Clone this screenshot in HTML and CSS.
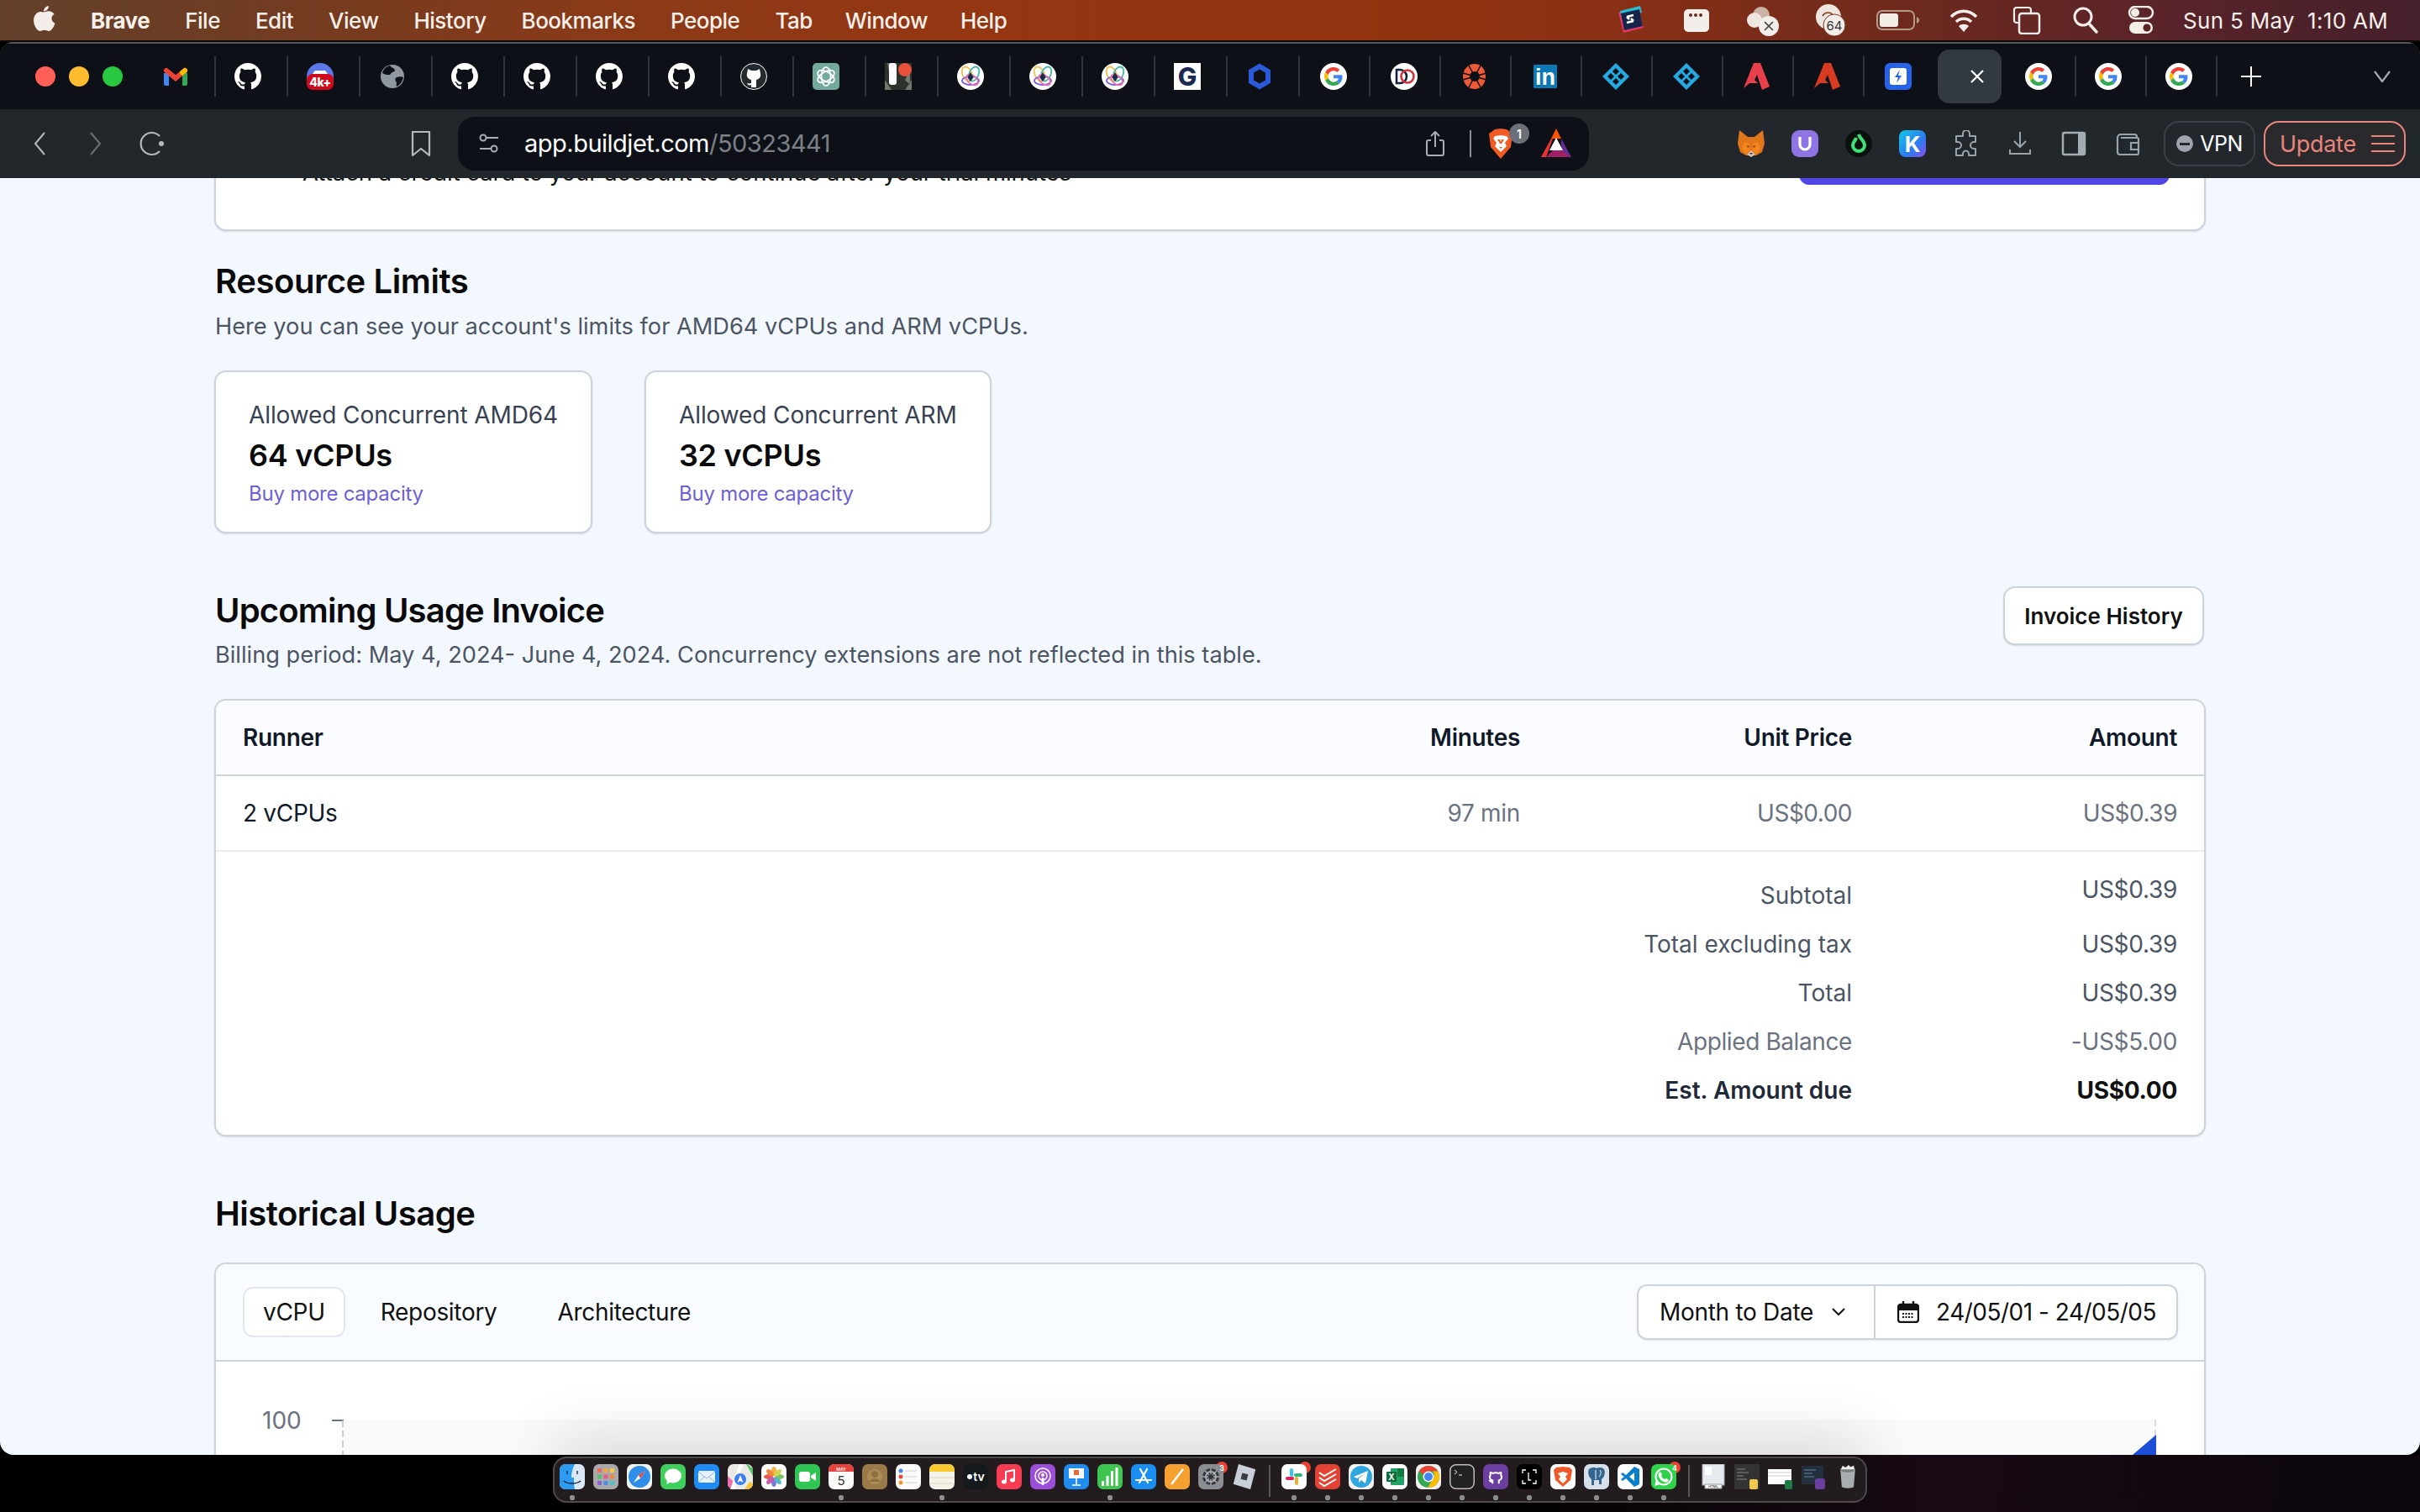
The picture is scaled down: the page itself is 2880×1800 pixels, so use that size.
FILE: index.html
```html
<!DOCTYPE html>
<html lang="en">
<head>
<meta charset="utf-8">
<title>BuildJet billing</title>
<link rel="stylesheet" href="styles.css">
</head>
<body>
<svg class="defs" xmlns="http://www.w3.org/2000/svg">
  <symbol id="gh" viewBox="0 0 16 16"><path fill="#fff" d="M8 0C3.58 0 0 3.58 0 8c0 3.54 2.29 6.53 5.47 7.59.4.07.55-.17.55-.38 0-.19-.01-.82-.01-1.49-2.01.37-2.53-.49-2.69-.94-.09-.23-.48-.94-.82-1.13-.28-.15-.68-.52-.01-.53.63-.01 1.08.58 1.23.82.72 1.21 1.87.87 2.33.66.07-.52.28-.87.51-1.07-1.78-.2-3.64-.89-3.64-3.95 0-.87.31-1.59.82-2.15-.08-.2-.36-1.02.08-2.12 0 0 .67-.21 2.2.82.64-.18 1.32-.27 2-.27.68 0 1.36.09 2 .27 1.53-1.04 2.2-.82 2.2-.82.44 1.1.16 1.92.08 2.12.51.56.82 1.27.82 2.15 0 3.07-1.87 3.75-3.65 3.95.29.25.54.73.54 1.48 0 1.07-.01 1.93-.01 2.2 0 .21.15.46.55.38A8.013 8.013 0 0016 8c0-4.42-3.58-8-8-8z"/></symbol>
  <symbol id="ghc" viewBox="0 0 32 32"><circle cx="16" cy="16" r="15.5" fill="#24292e" stroke="#fff"/><path fill="#fff" d="M8 12l1-5 4 2h6l4-2 1 5c1 4-1 7-5 8v9h-6v-3c-3 1-4 0-5-2 1 0 2 1 5 0v-4c-4-1-6-4-5-8z"/></symbol>
  <symbol id="gmail" viewBox="0 0 32 32"><path fill="#4285f4" d="M2 12h6v15H4a2 2 0 01-2-2z"/><path fill="#34a853" d="M24 12h6v13a2 2 0 01-2 2h-4z"/><path fill="none" stroke="#ea4335" stroke-width="6" stroke-linecap="round" d="M5 9l11 9 11-9"/><path fill="none" stroke="#fbbc05" stroke-width="6" stroke-linecap="round" d="M27 9l-3 2.500"/></symbol>
  <symbol id="goo" viewBox="0 0 32 32"><circle cx="16" cy="16" r="16" fill="#fff"/><g transform="translate(5 5) scale(.458)"><path fill="#EA4335" d="M24 9.5c3.54 0 6.71 1.22 9.21 3.6l6.85-6.85C35.9 2.38 30.47 0 24 0 14.62 0 6.51 5.38 2.56 13.22l7.98 6.19C12.43 13.72 17.74 9.5 24 9.5z"/><path fill="#4285F4" d="M46.98 24.55c0-1.57-.15-3.09-.38-4.55H24v9.02h12.94c-.58 2.96-2.26 5.48-4.78 7.18l7.73 6c4.51-4.18 7.09-10.36 7.09-17.65z"/><path fill="#FBBC05" d="M10.53 28.59c-.48-1.45-.76-2.99-.76-4.59s.27-3.14.76-4.59l-7.98-6.19C.92 16.46 0 20.12 0 24c0 3.88.92 7.54 2.56 10.78l7.97-6.19z"/><path fill="#34A853" d="M24 48c6.48 0 11.93-2.13 15.89-5.81l-7.73-6c-2.15 1.45-4.92 2.3-8.16 2.3-6.26 0-11.57-4.22-13.47-9.91l-7.98 6.19C6.51 42.62 14.62 48 24 48z"/></g></symbol>
  <symbol id="k4" viewBox="0 0 32 32"><path fill="#5b78e6" d="M0 16a16 16 0 0132 0v4H0z"/><path fill="#fff" d="M7 13l3-4h12l3 4z"/><rect y="13" width="32" height="19" rx="7" fill="#cf0a1c"/><text x="16" y="28" class="svg-4k">4k+</text></symbol>
  <symbol id="globe" viewBox="0 0 32 32"><circle cx="16" cy="16" r="14" fill="#9097a1"/><path fill="#0d1117" d="M13 3c2 3 6 3 6 6 0 2-4 1-5 4-1 2-6 1-8 0l-2-1c1-5 5-8 9-9zM21 17c3-1 6-1 8 0-1 5-4 9-8 11-1-2 1-4-1-6-1-2-1-4 1-5z"/></symbol>
  <symbol id="gpt" viewBox="0 0 32 32"><rect width="32" height="32" rx="5" fill="#74aa9c"/><g fill="none" stroke="#fff" stroke-width="1.7"><ellipse cx="16" cy="16" rx="5.5" ry="11"/><ellipse cx="16" cy="16" rx="5.5" ry="11" transform="rotate(60 16 16)"/><ellipse cx="16" cy="16" rx="5.5" ry="11" transform="rotate(120 16 16)"/></g></symbol>
  <symbol id="pic" viewBox="0 0 32 32"><rect width="32" height="32" fill="#2c332c"/><path fill="#6f7a6c" d="M0 20l8 12H0zM32 20l-8 12h8zM3 0h4v20zM24 20l6-12v18z"/><rect x="5" y="0" width="9" height="26" rx="3" fill="#fff"/><circle cx="24" cy="8" r="8" fill="#e8503c"/></symbol>
  <symbol id="eth" viewBox="0 0 32 32"><circle cx="16" cy="16" r="16" fill="#fff"/><g fill="none" stroke-width="1.8"><ellipse cx="12" cy="13" rx="5.5" ry="9" stroke="#f2c14e" transform="rotate(-25 12 13)"/><ellipse cx="20" cy="13" rx="5.5" ry="9" stroke="#43b7a8" transform="rotate(25 20 13)"/><ellipse cx="16" cy="21" rx="10" ry="5" stroke="#7a5be8"/><ellipse cx="18" cy="20" rx="8" ry="5" stroke="#ee6fa8" transform="rotate(40 18 20)"/></g><path fill="#1c2b4a" d="M16 11l3.500 6-3.500 5-3.500-5z"/></symbol>
  <symbol id="gsq" viewBox="0 0 32 32"><rect width="32" height="32" fill="#fff"/><text x="16" y="27" class="svg-gsq">G</text></symbol>
  <symbol id="hex" viewBox="0 0 32 32"><path fill="none" stroke="#2a5ada" stroke-width="6" d="M16 4l10 6v12l-10 6-10-6V10z"/></symbol>
  <symbol id="do" viewBox="0 0 32 32"><circle cx="16" cy="16" r="16" fill="#fff"/><path fill="none" stroke="#16213f" stroke-width="2.600" d="M7 8h4a8 8 0 010 16H7z"/><circle cx="20" cy="16" r="7.500" fill="none" stroke="#d8323a" stroke-width="2.600"/></symbol>
  <symbol id="orange" viewBox="0 0 32 32"><path fill="#ee5a36" d="M16 1c7 0 13 6 13 15s-6 15-13 15S2 25 2 16 9 1 16 1z"/><circle cx="16" cy="16" r="6" fill="#0d1117"/><path fill="none" stroke="#0d1117" stroke-width="1.500" d="M9 3l14 26M23 3L9 29M2 12l28 8M2 20l28-8"/></symbol>
  <symbol id="in" viewBox="0 0 32 32"><rect x="2" y="2" width="28" height="28" rx="1" fill="#0a78b5"/><text x="16" y="26" class="svg-in">in</text></symbol>
  <symbol id="dia" viewBox="0 0 32 32"><path fill="#25a9e0" d="M16 0l16 16-16 16L0 16z"/><path fill="#0d1117" d="M16 6l4 4-4 4-4-4zM16 18l4 4-4 4-4-4zM10 12l4 4-4 4-4-4zM22 12l4 4-4 4-4-4z"/></symbol>
  <symbol id="a1" viewBox="0 0 32 32"><path fill="#e8404a" d="M12 0h8l11 28-9 4-6-18-3 6 4 4H7l-7 6z"/></symbol>
  <symbol id="a2" viewBox="0 0 32 32"><path fill="#d93a22" d="M12 0h8l11 28-9 4-6-18-3 6 4 4H7l-7 6z"/></symbol>
  <symbol id="bolt" viewBox="0 0 32 32"><rect width="32" height="32" rx="6" fill="#2563eb"/><rect x="6" y="6" width="20" height="20" rx="3" fill="#fff"/><path fill="#2563eb" d="M18 8l-6 9h4l-2 7 6-9h-4z"/></symbol>

  <symbol id="d-finder" viewBox="0 0 30 30"><rect width="30" height="30" rx="7" fill="#dbe8f7"/><path fill="#2c9bf0" d="M7 0h11c-3 6-4 11-4 16h3c0 5 0 9 1 14H7a7 7 0 01-7-7V7a7 7 0 017-7z"/><path fill="none" stroke="#123" stroke-width="1.300" d="M5 20c5 4 15 4 20 0M9 8v4M21 8v4"/></symbol>
  <symbol id="d-launch" viewBox="0 0 30 30"><rect width="30" height="30" rx="7" fill="#a9a9ab"/><g><rect x="5" y="5" width="5" height="5" fill="#ef6a5a"/><rect x="12.500" y="5" width="5" height="5" fill="#f2a63d"/><rect x="20" y="5" width="5" height="5" fill="#f5c944"/><rect x="5" y="12.500" width="5" height="5" fill="#58c26b"/><rect x="12.500" y="12.500" width="5" height="5" fill="#e85c8a"/><rect x="20" y="12.500" width="5" height="5" fill="#f0863c"/><rect x="5" y="20" width="5" height="5" fill="#8a63d8"/><rect x="12.500" y="20" width="5" height="5" fill="#4a90e8"/><rect x="20" y="20" width="5" height="5" fill="#4cc2c4"/></g></symbol>
  <symbol id="d-safari" viewBox="0 0 30 30"><rect width="30" height="30" rx="7" fill="#f2f3f4"/><circle cx="15" cy="15" r="13" fill="#2f8fe8"/><path fill="#fff" d="M8 22l6-9 8-5-6 9z"/><path fill="#e8453c" d="M14 13l8-5-6 9z"/></symbol>
  <symbol id="d-msg" viewBox="0 0 30 30"><rect width="30" height="30" rx="7" fill="#3fcf5c"/><ellipse cx="15" cy="14" rx="10" ry="8.500" fill="#fff"/><path fill="#fff" d="M8 19l-1 5 6-3z"/></symbol>
  <symbol id="d-mail" viewBox="0 0 30 30"><rect width="30" height="30" rx="7" fill="#1f8cf5"/><rect x="5" y="8" width="20" height="14" rx="2" fill="#e9f1fa"/><path fill="none" stroke="#8eb8e6" d="M5 9l10 8 10-8M5 22l7-7M25 22l-7-7"/></symbol>
  <symbol id="d-maps" viewBox="0 0 30 30"><rect width="30" height="30" rx="7" fill="#e9ebe4"/><path fill="#59c36a" d="M12 0h10l8 14v-8L24 0z"/><path fill="#ee6fb0" d="M0 14l8 8v8H7a7 7 0 01-7-7z"/><path fill="#f5c63c" d="M20 30l6-9 4 2v0a7 7 0 01-7 7z"/><path fill="#fff" d="M14 0h5L8 30H3z"/><circle cx="15" cy="18" r="7" fill="#3a7ff0"/><path fill="#fff" d="M15 13l3.500 9-3.500-2-3.500 2z"/></symbol>
  <symbol id="d-photos" viewBox="0 0 30 30"><rect width="30" height="30" rx="7" fill="#fff"/><g opacity=".9"><ellipse cx="15" cy="8.500" rx="3" ry="5.500" fill="#f4a72c"/><ellipse cx="15" cy="21.500" rx="3" ry="5.500" fill="#6e67d8"/><ellipse cx="8.500" cy="15" rx="5.500" ry="3" fill="#e6483e"/><ellipse cx="21.500" cy="15" rx="5.500" ry="3" fill="#6cc04a"/><ellipse cx="10.500" cy="10.500" rx="3" ry="5.500" fill="#ee7a2d" transform="rotate(-45 10.500 10.500)"/><ellipse cx="19.500" cy="10.500" rx="3" ry="5.500" fill="#cfd23d" transform="rotate(45 19.500 10.500)"/><ellipse cx="10.500" cy="19.500" rx="3" ry="5.500" fill="#c94a9c" transform="rotate(45 10.500 19.500)"/><ellipse cx="19.500" cy="19.500" rx="3" ry="5.500" fill="#45b0b8" transform="rotate(-45 19.500 19.500)"/></g></symbol>
  <symbol id="d-ft" viewBox="0 0 30 30"><rect width="30" height="30" rx="7" fill="#2fc654"/><rect x="5" y="9" width="13" height="12" rx="3" fill="#fff"/><path fill="#fff" d="M19 14l6-4v10l-6-4z"/></symbol>
  <symbol id="d-cal" viewBox="0 0 30 30"><rect width="30" height="30" rx="7" fill="#fbfbfb"/><path fill="#e8433c" d="M7 0h16a7 7 0 017 7v2H0V7a7 7 0 017-7z"/><text x="15" y="7.500" class="svg-may">MAY</text><text x="15" y="25" class="svg-five">5</text></symbol>
  <symbol id="d-contacts" viewBox="0 0 30 30"><rect width="30" height="30" rx="7" fill="#9a7a48"/><circle cx="15" cy="15" r="9" fill="#ad8c58"/><circle cx="15" cy="12" r="4" fill="#8f7040"/><path fill="#8f7040" d="M8 21c2-5 12-5 14 0z"/></symbol>
  <symbol id="d-rem" viewBox="0 0 30 30"><rect width="30" height="30" rx="7" fill="#fbfbfb"/><circle cx="6" cy="8" r="2.500" fill="#3c86ea"/><circle cx="6" cy="15" r="2.500" fill="#e8483c"/><circle cx="6" cy="22" r="2.500" fill="#f09a2c"/><path stroke="#d0d0d0" d="M11 8h14M11 15h14M11 22h14"/></symbol>
  <symbol id="d-notes" viewBox="0 0 30 30"><rect width="30" height="30" rx="7" fill="#f5f2e8"/><path fill="#f9c932" d="M7 0h16a7 7 0 017 7v2H0V7a7 7 0 017-7z"/><path stroke="#dcd8cc" d="M0 16h30M0 23h30"/></symbol>
  <symbol id="d-tv" viewBox="0 0 30 30"><rect width="30" height="30" rx="7" fill="#141a1c"/><circle cx="8" cy="15" r="3" fill="#fff"/><text x="19" y="20" class="svg-tv">tv</text></symbol>
  <symbol id="d-music" viewBox="0 0 30 30"><rect width="30" height="30" rx="7" fill="#f53c52"/><path fill="none" stroke="#fff" stroke-width="2" d="M11 21V9l10-2v12"/><ellipse cx="9" cy="21" rx="3" ry="2.500" fill="#fff"/><ellipse cx="19" cy="19" rx="3" ry="2.500" fill="#fff"/></symbol>
  <symbol id="d-pod" viewBox="0 0 30 30"><rect width="30" height="30" rx="7" fill="#9a4fd6"/><circle cx="15" cy="14" r="9" fill="none" stroke="#fff" stroke-width="1.500"/><circle cx="15" cy="14" r="5" fill="none" stroke="#fff" stroke-width="1.500"/><circle cx="15" cy="13" r="2" fill="#fff"/><rect x="13.500" y="16" width="3" height="9" rx="1.500" fill="#fff"/></symbol>
  <symbol id="d-key" viewBox="0 0 30 30"><rect width="30" height="30" rx="7" fill="#1f8cee"/><rect x="6" y="5" width="18" height="12" fill="#fff"/><rect x="12" y="7" width="6" height="6" fill="#e86a3c"/><path stroke="#cfe2f7" stroke-width="2" d="M15 17v7M10 25h10"/></symbol>
  <symbol id="d-num" viewBox="0 0 30 30"><rect width="30" height="30" rx="7" fill="#3ec650"/><path fill="#fff" d="M5 20h3v6H5zM10.500 14h3v12h-3zM16 8h3v18h-3zM21.500 4h3v22h-3z"/></symbol>
  <symbol id="d-app" viewBox="0 0 30 30"><rect width="30" height="30" rx="7" fill="#1b8ef2"/><path fill="none" stroke="#fff" stroke-width="2.200" stroke-linecap="round" d="M11 6l9 16M19 6l-9 16M6 19h18"/></symbol>
  <symbol id="d-pages" viewBox="0 0 30 30"><rect width="30" height="30" rx="7" fill="#f5a030"/><path fill="none" stroke="#fff" stroke-width="2.500" d="M8 24L22 6"/></symbol>
  <symbol id="d-set" viewBox="0 0 30 30"><rect width="30" height="30" rx="7" fill="#8a8d92"/><circle cx="15" cy="15" r="10" fill="#33363a"/><circle cx="15" cy="15" r="6" fill="none" stroke="#a9acb0" stroke-width="2"/><path stroke="#a9acb0" stroke-width="1.500" d="M15 5v20M5 15h20M8 8l14 14M22 8L8 22"/><circle cx="15" cy="15" r="3" fill="#33363a"/></symbol>
  <symbol id="d-rob" viewBox="0 0 30 34"><path fill="#c9d0d8" d="M7 0l23 7-7 27L0 27z"/><path fill="#3a3d42" d="M12 12l8 2-2 8-8-2z"/></symbol>
  <symbol id="d-slack" viewBox="0 0 30 30"><rect width="30" height="30" rx="7" fill="#fff"/><path stroke-width="4" stroke-linecap="round" d="M12 7v6" stroke="#36c5f0"/><path stroke-width="4" stroke-linecap="round" d="M7 17h6" stroke="#e01e5a"/><path stroke-width="4" stroke-linecap="round" d="M18 23v-6" stroke="#ecb22e"/><path stroke-width="4" stroke-linecap="round" d="M23 13h-6" stroke="#2eb67d"/></symbol>
  <symbol id="d-todo" viewBox="0 0 30 30"><rect width="30" height="30" rx="7" fill="#e44232"/><path fill="none" stroke="#fff" stroke-width="2" d="M5 10l6 4 14-8M5 16l6 4 14-8M5 22l6 4 14-8"/></symbol>
  <symbol id="d-tg" viewBox="0 0 30 30"><rect width="30" height="30" rx="7" fill="#f3f3f3"/><circle cx="15" cy="15" r="13" fill="#2fa6e0"/><path fill="#fff" d="M6 15l17-7-3 15-5-4-3 3v-5l8-6-10 6z"/></symbol>
  <symbol id="d-xl" viewBox="0 0 30 30"><rect width="30" height="30" rx="7" fill="#fff"/><rect x="10" y="5" width="16" height="20" rx="1" fill="#21a366"/><path fill="#107c41" d="M18 5h8v10h-8z"/><rect x="5" y="9" width="12" height="12" rx="1" fill="#0e6b38"/><text x="11" y="19" class="svg-x">X</text></symbol>
  <symbol id="d-chrome" viewBox="0 0 30 30"><rect width="30" height="30" rx="7" fill="#f1f1f1"/><circle cx="15" cy="15" r="13" fill="#34a853"/><path fill="#ea4335" d="M3.700 8.500A13 13 0 0126.300 8.500H15a6.500 6.500 0 00-6 4z"/><path fill="#fbbc05" d="M26.300 8.500A13 13 0 0114 28l6-10a6.500 6.500 0 000-9.500z"/><circle cx="15" cy="15" r="6.500" fill="#fff"/><circle cx="15" cy="15" r="5" fill="#4285f4"/></symbol>
  <symbol id="d-term" viewBox="0 0 30 30"><rect x=".75" y=".75" width="28.500" height="28.500" rx="7" fill="#222" stroke="#bbb" stroke-width="1.500"/><path fill="none" stroke="#eee" d="M6 7l3 2.500-3 2.500M11 13h4"/></symbol>
  <symbol id="d-ghd" viewBox="0 0 30 30"><rect width="30" height="30" rx="7" fill="#6b3ea0"/><g transform="translate(5 5) scale(1.25)"><circle cx="8" cy="8" r="8" fill="#6b3ea0"/><path fill="none" stroke="#fff" stroke-width="1.600" d="M5 14.500v-3C2 11 2 8 3 6.500 2.800 5 3 4 3 4s1 0 2.200.8a8 8 0 015.600 0C12 4 13 4 13 4s.2 1 0 2.500c1 1.500 1 4.500-2 5v3M5 13c-2 0-2.500-1-3-2"/></g></symbol>
  <symbol id="d-linear" viewBox="0 0 30 30"><rect width="30" height="30" rx="7" fill="#000"/><path fill="none" stroke="#fff" stroke-width="1.300" d="M7 11V7h4M19 7h4v4M7 19v4h4M19 23h4v-4M14 10v9h3"/></symbol>
  <symbol id="d-brave" viewBox="0 0 30 30"><rect width="30" height="30" rx="7" fill="#fff"/><path fill="#ef5a28" d="M15 3l8 1 3 3-2 12-9 8-9-8L4 7l3-3z"/><path fill="#fff" d="M15 9l6 2-3 4 2 3-5 5-5-5 2-3-3-4z"/></symbol>
  <symbol id="d-pg" viewBox="0 0 30 30"><rect width="30" height="30" rx="7" fill="#d5e0ea"/><path fill="#336791" d="M6 6c4-3 8-2 9-1 3-2 7-1 9 1 2 4 0 10-3 12v6h-3v-5h-6v6h-3v-7C6 16 4 10 6 6z"/><path fill="none" stroke="#fff" d="M14 7v11M19 7c2 3 1 6-1 8"/></symbol>
  <symbol id="d-vsc" viewBox="0 0 30 30"><rect width="30" height="30" rx="7" fill="#fff"/><path fill="#0a7fcc" d="M20 3l6 3v18l-6 3-10-10-4 3-2-2 4-3-4-3 2-2 4 3z"/><path fill="#fff" d="M20 10l-6 5 6 5z"/></symbol>
  <symbol id="d-wa" viewBox="0 0 30 30"><rect width="30" height="30" rx="7" fill="#2fd24a"/><circle cx="15" cy="15" r="9.500" fill="none" stroke="#fff" stroke-width="2.200"/><path fill="#fff" d="M4 26l2-7 5 5zM11 9l2 3-1 2c1 2 2 3 4 4l2-1 3 2c-1 3-4 3-6 2-3-1-5-4-6-6-1-3 0-5 2-6z"/></symbol>
  <symbol id="d-doc" viewBox="0 0 30 30"><rect x="2" y="0" width="26" height="25" fill="#e5ebef" stroke="#aab"/><rect x="5" y="3" width="8" height="10" fill="#fff"/><path fill="#fff" stroke="#999" d="M5 24h20v5H5z"/><text x="15" y="28" class="svg-html">HTML</text></symbol>
  <symbol id="d-stack1" viewBox="0 0 30 30"><rect width="30" height="30" fill="#333"/><path stroke="#888" d="M3 6h10M3 10h14M3 14h8M3 18h12"/><rect x="18" y="18" width="10" height="12" rx="2" fill="#f2c94c"/></symbol>
  <symbol id="d-stack2" viewBox="0 0 30 30"><rect y="6" width="28" height="18" fill="#fff"/><path stroke="#ccc" d="M0 10h28M0 14h28"/><rect x="20" y="19" width="9" height="11" rx="2" fill="#1d7a45"/></symbol>
  <symbol id="d-stack3" viewBox="0 0 30 30"><rect y="2" width="26" height="22" fill="#23303f"/><path stroke="#6c88a8" d="M3 7h14M3 11h10M3 15h12"/><rect x="16" y="17" width="12" height="13" rx="3" fill="#6b3ea0"/></symbol>
  <symbol id="d-trash" viewBox="0 0 30 34"><path fill="#a8adb0" d="M5 7h20l-2 24c-3 2-13 2-16 0z"/><ellipse cx="15" cy="7" rx="10" ry="4" fill="#777c80"/><path fill="#eee" d="M8 2l4 3 4-4 3 3 4-2 1 5H6z"/></symbol>
</svg>

<div class="screen">
  <header class="menubar">
    <div class="menu-left">
      <svg class="apple" viewBox="0 0 26 32"><path fill="#f4eeea" d="M18 1c0 3-2 6-6 6.500C12 4 14.500 1.500 18 1zM12 8.500c1.500 0 3-1.300 6-1.300 2.500 0 5 1.300 6.500 3.500-4.500 2.800-3.800 9 1 11-1.300 4-4.500 9.300-7.500 9.300-2 0-3-1.200-5.200-1.200-2.300 0-3.300 1.200-5.100 1.200C4 31 0 24 0 18.500 0 12.500 4 8 8 8c1.700 0 3 .5 4 .5z"/></svg>
      <span class="app-name">Brave</span>
      <span>File</span><span>Edit</span><span>View</span><span>History</span><span>Bookmarks</span><span>People</span><span>Tab</span><span>Window</span><span>Help</span>
    </div>
    <div class="menu-right">
      <span class="mslot s78"><svg class="mi34" viewBox="0 0 34 34"><path fill="#e0386c" d="M2 8l24-6 6 24-24 6z"/><path fill="#2bbbd0" d="M4 6l24-6 2 8L6 14z"/><path fill="#16244a" d="M5 9l22-5 4 20-22 5z"/><path fill="none" stroke="#fff" stroke-width="2.500" d="M12 20l8-2M20 18l-3-3M12 13l8-2M12 13l3 3"/></svg></span>
      <span class="mslot s78"><svg class="mi34" viewBox="0 0 34 34"><rect x="2" y="4" width="30" height="27" rx="5" fill="#f4eeea"/><circle cx="10" cy="11" r="2" fill="#6a2a1c"/><circle cx="16" cy="11" r="2" fill="#6a2a1c"/><circle cx="22" cy="11" r="2" fill="#6a2a1c"/></svg></span>
      <span class="mslot s78"><svg class="mi42" viewBox="0 0 42 42"><circle cx="20" cy="15" r="10" fill="#c9b3a6"/><circle cx="12" cy="21" r="9" fill="#efe6df"/><circle cx="29" cy="28" r="12" fill="#f4eeea"/><path stroke="#444" stroke-width="1.700" d="M24 23l10 10M34 23L24 33"/></svg></span>
      <span class="mslot s90"><svg class="mi42" viewBox="0 0 42 42"><circle cx="19" cy="17" r="15" fill="#efe6df"/><path fill="none" stroke="#7a3a22" stroke-width="1.500" d="M12 16c3-5 8-5 12-2"/><circle cx="26" cy="27" r="13" fill="#f4eeea" stroke="#7a3a22"/><text x="26" y="33" class="svg-64">64</text></svg></span>
      <span class="mslot s78"><svg class="batt" viewBox="0 0 52 24"><rect x="1" y="1" width="44" height="22" rx="6" fill="none" stroke="#b59a8c" stroke-width="2"/><rect x="4" y="4" width="22" height="16" rx="3" fill="#f4eeea"/><path fill="#b59a8c" d="M48 8c2 1 3 2 3 4s-1 3-3 4z"/></svg></span>
      <span class="mslot s78"><svg class="mi34" viewBox="0 0 34 34"><path fill="none" stroke="#f4eeea" stroke-width="3.500" d="M2 13c9-9 21-9 30 0M8 19c5-5 13-5 18 0"/><path fill="#f4eeea" d="M17 31l-6-7c3-3 9-3 12 0z"/></svg></span>
      <span class="mslot s70"><svg class="mi34" viewBox="0 0 34 34"><path fill="none" stroke="#f4eeea" stroke-width="2.200" d="M7 20H5a3 3 0 01-3-3V5a3 3 0 013-3h14a3 3 0 013 3v3"/><rect x="8" y="9" width="24" height="24" rx="3" fill="none" stroke="#f4eeea" stroke-width="2.500"/></svg></span>
      <span class="mslot s68"><svg class="mi34" viewBox="0 0 34 34"><circle cx="14" cy="13" r="10" fill="none" stroke="#f4eeea" stroke-width="3"/><path stroke="#f4eeea" stroke-width="3.500" stroke-linecap="round" d="M21 21l9 10"/></svg></span>
      <span class="mslot s50"><svg class="mi34" viewBox="0 0 34 34"><rect x="3" y="1" width="28" height="14" rx="7" fill="none" stroke="#f4eeea" stroke-width="2.500"/><circle cx="10" cy="8" r="5" fill="#f4eeea"/><rect x="3" y="19" width="28" height="14" rx="7" fill="#f4eeea"/><circle cx="24" cy="26" r="4.500" fill="#5d2325"/></svg></span>
      <time class="clock">Sun 5 May&nbsp; 1:10 AM</time>
    </div>
  </header>

  <div class="window">
    <div class="tabstrip">
      <div class="lights"><i class="light red"></i><i class="light amber"></i><i class="light green"></i></div>
      <div class="tab"><svg class="fav"><use href="#gmail"/></svg></div>
      <div class="tab"><svg class="fav"><use href="#gh"/></svg></div>
      <div class="tab"><svg class="fav"><use href="#k4"/></svg></div>
      <div class="tab"><svg class="fav"><use href="#globe"/></svg></div>
      <div class="tab"><svg class="fav"><use href="#gh"/></svg></div>
      <div class="tab"><svg class="fav"><use href="#gh"/></svg></div>
      <div class="tab"><svg class="fav"><use href="#gh"/></svg></div>
      <div class="tab"><svg class="fav"><use href="#gh"/></svg></div>
      <div class="tab"><svg class="fav"><use href="#ghc"/></svg></div>
      <div class="tab"><svg class="fav"><use href="#gpt"/></svg></div>
      <div class="tab"><svg class="fav"><use href="#pic"/></svg></div>
      <div class="tab"><svg class="fav"><use href="#eth"/></svg></div>
      <div class="tab"><svg class="fav"><use href="#eth"/></svg></div>
      <div class="tab"><svg class="fav"><use href="#eth"/></svg></div>
      <div class="tab"><svg class="fav"><use href="#gsq"/></svg></div>
      <div class="tab"><svg class="fav"><use href="#hex"/></svg></div>
      <div class="tab narrow"><svg class="fav"><use href="#goo"/></svg></div>
      <div class="tab narrow"><svg class="fav"><use href="#do"/></svg></div>
      <div class="tab narrow"><svg class="fav"><use href="#orange"/></svg></div>
      <div class="tab narrow"><svg class="fav"><use href="#in"/></svg></div>
      <div class="tab narrow"><svg class="fav"><use href="#dia"/></svg></div>
      <div class="tab narrow"><svg class="fav"><use href="#dia"/></svg></div>
      <div class="tab narrow"><svg class="fav"><use href="#a1"/></svg></div>
      <div class="tab narrow"><svg class="fav"><use href="#a2"/></svg></div>
      <div class="tab narrow plain"><svg class="fav"><use href="#bolt"/></svg></div>
      <div class="tab-active"><svg class="close" viewBox="0 0 16 16"><path stroke="#fff" stroke-width="2.200" d="M1 1l14 14M15 1L1 15"/></svg></div>
      <div class="tab narrow after-active"><svg class="fav"><use href="#goo"/></svg></div>
      <div class="tab narrow tight"><svg class="fav"><use href="#goo"/></svg></div>
      <div class="tab narrow tight"><svg class="fav"><use href="#goo"/></svg></div>
      <svg class="plus" viewBox="0 0 24 24"><path stroke="#fff" stroke-width="2" d="M12 0v24M0 12h24"/></svg>
      <svg class="tabs-more" viewBox="0 0 20 14"><path fill="none" stroke="#a3abb2" stroke-width="2.200" d="M1 1l9 12 9-12"/></svg>
    </div>

    <div class="toolbar">
      <div class="nav">
        <span class="tslot"><svg class="ic-chev" viewBox="0 0 14 28"><path fill="none" stroke="#b4b9bd" stroke-width="2" d="M13 1L2 14l11 13"/></svg></span>
        <span class="tslot"><svg class="ic-chev" viewBox="0 0 14 28"><path fill="none" stroke="#6b7075" stroke-width="2" d="M1 1l11 13L1 27"/></svg></span>
        <span class="tslot"><svg class="ic-30" viewBox="0 0 30 30"><path fill="none" stroke="#b4b9bd" stroke-width="2.200" d="M24 6A13 13 0 1024 24"/><circle cx="26" cy="15" r="3" fill="#b4b9bd"/></svg></span>
      </div>
      <span class="tslot bookmark"><svg class="ic-30" viewBox="0 0 30 30"><path fill="none" stroke="#b4b9bd" stroke-width="2.200" stroke-linejoin="round" d="M5 1h20v28l-10-8-10 8z"/></svg></span>
      <div class="urlbar">
        <svg class="ic-sliders" viewBox="0 0 24 24"><g fill="none" stroke="#a9aeb3" stroke-width="2"><circle cx="5" cy="5" r="3.500"/><path d="M9 5h14M1 18h13"/><circle cx="18" cy="18" r="3.500"/></g></svg>
        <span class="url"><span class="host">app.buildjet.com</span><span class="path">/50323441</span></span>
        <svg class="ic-share" viewBox="0 0 22 32"><path fill="none" stroke="#a9aeb3" stroke-width="2" stroke-linejoin="round" d="M6 12H3a2 2 0 00-2 2v14a2 2 0 002 2h16a2 2 0 002-2V14a2 2 0 00-2-2h-3M11 20V2M6 7l5-5 5 5"/></svg>
        <i class="url-sep"></i>
        <span class="lion">
          <svg class="ic-lion" viewBox="0 0 28 36"><path fill="#f15a22" d="M14 0l7 1 4 3 3 2-2 16-12 14L2 22 0 6l3-2 4-3z"/><path fill="#fff" d="M14 8l7 1 2 3-4 5 2 4-7 7-7-7 2-4-4-5 2-3z"/><path fill="#f15a22" d="M10 13h3l1 3 1-3h3l-3 5h-2zM12 22h4l-2 2z"/></svg>
          <b class="lion-badge">1</b>
        </span>
        <svg class="ic-bat" viewBox="0 0 36 36"><path fill="#ff5000" d="M18 0l6 12H12z"/><path fill="#e8332f" d="M12 12h2L6 34H0z"/><path fill="#662d91" d="M24 12l12 22H6l6-4h12z"/><path fill="#9e1f63" d="M6 34l12-12 18 12z"/><path fill="#fff" d="M18 11l8 15H10z"/></svg>
      </div>
      <div class="exts">
        <span class="xslot"><svg class="ic-32" viewBox="0 0 32 32"><path fill="#e2761b" d="M2 0l10 8h8L30 0l2 16-3 10-7 4H10l-7-4-3-10z"/><path fill="#f6851b" d="M8 14l6 2v8l-4 4-5-6zM24 14l-6 2v8l4 4 5-6z"/><path fill="#763d16" d="M11 18l3 1-2 2zM21 18l-3 1 2 2z"/><path fill="#d7c1b3" d="M11 29l5-5 5 5-5 3z"/><path fill="#233447" d="M14 27h4l-2 2z"/></svg></span>
        <span class="xslot"><svg class="ic-32" viewBox="0 0 32 32"><rect width="32" height="32" rx="9" fill="#8f75e3"/><path fill="none" stroke="#fff" stroke-width="3.200" d="M10 8v9a6 6 0 0012 0V8"/></svg></span>
        <span class="xslot"><svg class="ic-32" viewBox="0 0 32 32"><circle cx="16" cy="16" r="16" fill="#08110c"/><path fill="none" stroke="#3fe07a" stroke-width="4" d="M16 5c1 5 7 7 7 13a7 7 0 01-14 0c0-4 3-5 4-9"/></svg></span>
        <span class="xslot"><svg class="ic-32" viewBox="0 0 32 32"><defs><linearGradient id="kg" x1="0" y1="0" x2="1" y2="1"><stop offset="0" stop-color="#12c8e6"/><stop offset=".6" stop-color="#2c7cf0"/><stop offset="1" stop-color="#8a4ef0"/></linearGradient></defs><rect width="32" height="32" rx="8" fill="url(#kg)"/><text x="16" y="26" class="svg-k">K</text></svg></span>
        <span class="xslot"><svg class="ic-32" viewBox="0 0 32 32"><path fill="none" stroke="#9aa3a9" stroke-width="2" stroke-linejoin="round" d="M12 4a4 4 0 018 0v3h7v7h-2a4 4 0 000 8h2v8H19v-2a3.500 3.500 0 00-7 0v2H4v-8h2a4 4 0 000-8H4V7h8z"/></svg></span>
        <span class="xslot"><svg class="ic-30" viewBox="0 0 30 30"><path fill="none" stroke="#9aa3a9" stroke-width="2" d="M15 1v18M8 12l7 7 7-7M3 22v5h24v-5"/></svg></span>
        <span class="xslot"><svg class="ic-30" viewBox="0 0 30 30"><rect x="2" y="2" width="26" height="26" rx="2" fill="none" stroke="#a3acb1" stroke-width="2.500"/><rect x="20" y="2" width="8" height="26" fill="#a3acb1"/></svg></span>
        <span class="xslot"><svg class="ic-30" viewBox="0 0 30 30"><path fill="none" stroke="#9aa3a9" stroke-width="2.200" d="M3 8a4 4 0 014-4h16a3 3 0 013 3v1H7M3 8v17a3 3 0 003 3h20a2 2 0 002-2V10a2 2 0 00-2-2H7M28 14h-9v8h9"/></svg></span>
      </div>
      <div class="vpn"><i class="vpn-dot"></i><span>VPN</span></div>
      <div class="update"><span>Update</span><svg class="ic-burger" viewBox="0 0 28 22"><path stroke="#e8857c" stroke-width="2.200" d="M0 2h28M0 11h28M0 20h28"/></svg></div>
    </div>

    <main class="page">
      <section class="card trial">
        <p class="trial-text">Attach a credit card to your account to continue after your trial minutes</p>
        <button class="pay-btn"></button>
      </section>

      <h2 class="title first">Resource Limits</h2>
      <p class="sub">Here you can see your account's limits for AMD64 vCPUs and ARM vCPUs.</p>
      <div class="limits">
        <article class="card limit amd">
          <p class="limit-label">Allowed Concurrent AMD64</p>
          <p class="limit-value">64 vCPUs</p>
          <a class="limit-link">Buy more capacity</a>
        </article>
        <article class="card limit">
          <p class="limit-label">Allowed Concurrent ARM</p>
          <p class="limit-value">32 vCPUs</p>
          <a class="limit-link">Buy more capacity</a>
        </article>
      </div>

      <div class="section-head">
        <div class="section-text">
          <h2 class="title">Upcoming Usage Invoice</h2>
          <p class="sub">Billing period: May 4, 2024- June 4, 2024. Concurrency extensions are not reflected in this table.</p>
        </div>
        <button class="card history-btn">Invoice History</button>
      </div>

      <section class="card invoice">
        <div class="inv-row inv-head"><span>Runner</span><span class="r">Minutes</span><span class="r">Unit Price</span><span class="r">Amount</span></div>
        <div class="inv-row inv-body"><span class="runner">2 vCPUs</span><span class="r">97 min</span><span class="r num">US$0.00</span><span class="r num">US$0.39</span></div>
        <div class="summary">
          <div class="sum-row"><span>Subtotal</span><span class="raised num">US$0.39</span></div>
          <div class="sum-row"><span>Total excluding tax</span><span class="num">US$0.39</span></div>
          <div class="sum-row"><span>Total</span><span class="num">US$0.39</span></div>
          <div class="sum-row"><span>Applied Balance</span><span class="num">-US$5.00</span></div>
          <div class="sum-row strong"><span>Est. Amount due</span><span class="num">US$0.00</span></div>
        </div>
      </section>

      <h2 class="title hist">Historical Usage</h2>
      <section class="card usage">
        <div class="usage-head">
          <div class="usage-tabs">
            <span class="utab on">vCPU</span><span class="utab">Repository</span><span class="utab">Architecture</span>
          </div>
          <div class="range">
            <div class="range-sel"><span>Month to Date</span><svg class="ic-down" viewBox="0 0 16 10"><path fill="none" stroke="#111" stroke-width="2" d="M1 1l7 7 7-7"/></svg></div>
            <div class="range-date"><svg class="ic-cal" viewBox="0 0 26 26"><rect x="1" y="4" width="24" height="21" rx="3" fill="none" stroke="#111" stroke-width="2.400"/><rect x="1" y="4" width="24" height="7" fill="#111"/><path stroke="#111" stroke-width="2.400" d="M7 0v6M19 0v6"/><path stroke="#111" stroke-width="2" stroke-dasharray="2 1.500" d="M6 15h14M6 19h14"/></svg><span class="num">24/05/01 - 24/05/05</span></div>
          </div>
        </div>
        <div class="chart">
          <span class="axis">100</span>
          <svg class="plot" viewBox="0 0 2171 60" preserveAspectRatio="none"><rect x="14" y="0" width="2156" height="60" fill="#000" opacity=".018"/><path stroke="#6b7280" stroke-width="2" d="M0 1h14"/><path stroke="#c9ced6" stroke-width="2" stroke-dasharray="8 4" d="M13 1v59"/><path stroke="#d8dce2" stroke-width="2" stroke-dasharray="8 4" d="M2170 0v60"/><path fill="#1d4ed8" d="M2171 18v24h-28z"/></svg>
        </div>
      </section>
      <div class="dock-shadow"></div>
    </main>
  </div>

  <footer class="dock-area">
    <nav class="dock">
      <span class="dcell on"><svg class="dk"><use href="#d-finder"/></svg></span>
      <span class="dcell"><svg class="dk"><use href="#d-launch"/></svg></span>
      <span class="dcell"><svg class="dk"><use href="#d-safari"/></svg></span>
      <span class="dcell"><svg class="dk"><use href="#d-msg"/></svg></span>
      <span class="dcell"><svg class="dk"><use href="#d-mail"/></svg></span>
      <span class="dcell"><svg class="dk"><use href="#d-maps"/></svg></span>
      <span class="dcell"><svg class="dk"><use href="#d-photos"/></svg></span>
      <span class="dcell"><svg class="dk"><use href="#d-ft"/></svg></span>
      <span class="dcell on"><svg class="dk"><use href="#d-cal"/></svg></span>
      <span class="dcell"><svg class="dk"><use href="#d-contacts"/></svg></span>
      <span class="dcell"><svg class="dk"><use href="#d-rem"/></svg></span>
      <span class="dcell on"><svg class="dk"><use href="#d-notes"/></svg></span>
      <span class="dcell"><svg class="dk"><use href="#d-tv"/></svg></span>
      <span class="dcell"><svg class="dk"><use href="#d-music"/></svg></span>
      <span class="dcell"><svg class="dk"><use href="#d-pod"/></svg></span>
      <span class="dcell"><svg class="dk"><use href="#d-key"/></svg></span>
      <span class="dcell on"><svg class="dk"><use href="#d-num"/></svg></span>
      <span class="dcell"><svg class="dk"><use href="#d-app"/></svg></span>
      <span class="dcell"><svg class="dk"><use href="#d-pages"/></svg></span>
      <span class="dcell"><svg class="dk"><use href="#d-set"/></svg><b class="dbadge">3</b></span>
      <span class="dcell"><svg class="dk"><use href="#d-rob"/></svg></span>
      <i class="dsep"></i>
      <span class="dcell on"><svg class="dk"><use href="#d-slack"/></svg><b class="dbadge">•</b></span>
      <span class="dcell on"><svg class="dk"><use href="#d-todo"/></svg></span>
      <span class="dcell on"><svg class="dk"><use href="#d-tg"/></svg></span>
      <span class="dcell on"><svg class="dk"><use href="#d-xl"/></svg></span>
      <span class="dcell on"><svg class="dk"><use href="#d-chrome"/></svg></span>
      <span class="dcell on"><svg class="dk"><use href="#d-term"/></svg></span>
      <span class="dcell on"><svg class="dk"><use href="#d-ghd"/></svg></span>
      <span class="dcell on"><svg class="dk"><use href="#d-linear"/></svg></span>
      <span class="dcell on"><svg class="dk"><use href="#d-brave"/></svg></span>
      <span class="dcell on"><svg class="dk"><use href="#d-pg"/></svg></span>
      <span class="dcell on"><svg class="dk"><use href="#d-vsc"/></svg></span>
      <span class="dcell on"><svg class="dk"><use href="#d-wa"/></svg><b class="dbadge">4</b></span>
      <i class="dsep"></i>
      <span class="dcell"><svg class="dk"><use href="#d-doc"/></svg></span>
      <span class="dcell"><svg class="dk"><use href="#d-stack1"/></svg></span>
      <span class="dcell"><svg class="dk"><use href="#d-stack2"/></svg></span>
      <span class="dcell"><svg class="dk"><use href="#d-stack3"/></svg></span>
      <span class="dcell"><svg class="dk"><use href="#d-trash"/></svg></span>
    </nav>
  </footer>
</div>
</body>
</html>
```
FILE: styles.css
```css
* { box-sizing: border-box; }
html, body { margin: 0; padding: 0; background: #000; }
body { font-family: "Inter", "Liberation Sans", sans-serif; color: #111; overflow: hidden; }
p, h2 { margin: 0; }
button { font: inherit; }
.defs { display: none; }

.screen { width: 2880px; height: 1800px; display: flex; flex-direction: column; background: #000; }

/* menu bar */
.menubar {
  height: 50px; flex: none; display: flex; justify-content: space-between; align-items: flex-start;
  background: linear-gradient(90deg, #63402c 0%, #6f3c22 10%, #8a3a18 25%, #943612 40%, #92340f 55%, #8a3014 66%, #6f2a1d 78%, #58232a 90%, #44202a 100%);
  border-bottom: 2px solid #0a0a0a; color: #f7efe9; font-size: 26px;
}
.menu-left { display: flex; align-items: center; height: 48px; gap: 42px; padding-left: 40px; font-weight: 500; letter-spacing: -0.5px; }
.menu-left span:nth-last-child(2) { margin-left: -3px; }
.menu-left span:last-child { margin-left: -3px; }
.apple { width: 26px; height: 32px; margin-top: -4px; }
.app-name { font-weight: 700; }
.menu-right { display: flex; align-items: center; height: 48px; padding-right: 38px; }
.mslot { display: flex; justify-content: center; align-items: center; height: 48px; }
.s78 { width: 78px; } .s90 { width: 84px; } .s70 { width: 72px; } .s68 { width: 68px; } .s50 { width: 64px; }
.mi34 { width: 34px; height: 34px; }
.mi42 { width: 42px; height: 42px; }
.batt { width: 52px; height: 24px; }
.clock { margin-left: 18px; font-weight: 400; white-space: pre; letter-spacing: 0.3px; }
.svg-64 { font: 15px "Inter", sans-serif; text-anchor: middle; fill: #333; }

/* window */
.window { flex: 1; height: 1682px; border-radius: 16px; overflow: hidden; display: flex; flex-direction: column; box-shadow: inset 0 2px 0 #55585b; background: #0d1117; }

.tabstrip { height: 80px; flex: none; display: flex; align-items: center; background: #0d1117; border-top: 2px solid #55585b; }
.lights { width: 171px; display: flex; gap: 16px; padding-left: 42px; flex: none; }
.light { width: 24px; height: 24px; border-radius: 50%; }
.red { background: #ff5f57; } .amber { background: #febc2e; } .green { background: #28c840; }
.tab { width: 86px; height: 48px; flex: none; display: flex; align-items: center; padding-left: 22px; border-right: 2px solid #30363d; }
.tab.narrow { width: 84px; padding-left: 24px; }
.tab.plain { border-right: 0; }
.tab.after-active { padding-left: 23px; margin-left: 5px; }
.tab.tight { padding-left: 22px; }
.fav { width: 32px; height: 32px; display: block; }
.tab-active { width: 76px; height: 64px; flex: none; margin-left: 3px; background: #323a40; border-radius: 14px; display: flex; align-items: center; padding-left: 39px; }
.close { width: 16px; height: 16px; }
.plus { width: 24px; height: 24px; margin-left: 28px; flex: none; }
.tabs-more { width: 20px; height: 14px; margin-left: auto; margin-right: 35px; flex: none; }
.svg-4k { font: 800 14px "Inter", sans-serif; text-anchor: middle; fill: #fff; letter-spacing: -0.4px; }
.svg-gsq { font: 800 30px "Inter", sans-serif; text-anchor: middle; fill: #1d2b52; }
.svg-in { font: 700 27px "Liberation Sans", sans-serif; text-anchor: middle; fill: #fff; }
.svg-k { font: 700 26px "Inter", sans-serif; text-anchor: middle; fill: #fff; }

/* toolbar */
.toolbar { height: 82px; flex: none; display: flex; align-items: center; background: #22272c; }
.nav { display: flex; padding-left: 13px; }
.tslot { width: 67px; display: flex; justify-content: center; align-items: center; }
.bookmark { margin-left: 253px; }
.ic-chev { width: 14px; height: 28px; }
.ic-30 { width: 30px; height: 30px; }
.ic-32 { width: 32px; height: 32px; }
.urlbar { width: 1346px; height: 64px; margin-left: 11px; background: #0d1117; border-radius: 20px; display: flex; align-items: center; padding: 0 21px 0 25px; flex: none; }
.ic-sliders { width: 24px; height: 24px; flex: none; }
.url { margin-left: 30px; font-size: 29px; color: #fff; letter-spacing: -0.5px; margin-top: -2px; }
.path { color: #7c8187; }
.ic-share { width: 22px; height: 32px; margin-left: auto; flex: none; }
.url-sep { width: 2px; height: 32px; background: #8a8f94; margin-left: 30px; flex: none; }
.lion { display: flex; margin-left: 21px; flex: none; width: 62px; }
.ic-lion { width: 28px; height: 36px; }
.lion-badge { width: 24px; height: 24px; margin: -6px 0 0 -4px; border-radius: 50%; background: #6b7078; color: #fff; font-size: 14px; font-weight: 600; display: flex; align-items: center; justify-content: center; flex: none; }
.ic-bat { width: 36px; height: 36px; flex: none; }
.exts { display: flex; margin-left: 161px; }
.xslot { width: 64px; display: flex; justify-content: center; align-items: center; }
.vpn { width: 109px; height: 54px; margin-left: 11px; border: 2px solid #3a4047; border-radius: 18px; display: flex; align-items: center; justify-content: center; gap: 8px; color: #fff; font-size: 25px; letter-spacing: -0.5px; flex: none; }
.vpn-dot { width: 20px; height: 20px; border-radius: 50%; background: #9ea3ad; display: flex; align-items: center; }
.vpn-dot::after { content: ""; width: 12px; height: 3px; background: #22272c; margin-left: 4px; }
.update { width: 169px; height: 54px; margin-left: 10px; border: 2px solid #e8857c; border-radius: 18px; display: flex; align-items: center; justify-content: flex-start; padding-left: 17px; gap: 18px; color: #e8857c; font-size: 27px; letter-spacing: -0.3px; flex: none; background: #2a2a2d; }
.ic-burger { width: 28px; height: 22px; }

/* page */
.page { flex: 1; min-height: 0; overflow: hidden; background: #f3f8fe; padding: 0 255px; color: #111; position: relative; }
.card { background: #fff; border: 2px solid #cdd3db; border-radius: 14px; box-shadow: 0 1px 2px rgba(0,0,0,.12); }
.trial { height: 120px; margin-top: -57px; display: flex; justify-content: space-between; align-items: flex-end; padding: 0 41px 53px 103px; }
.trial-text { font-size: 27.4px; line-height: 40px; color: #111; margin-bottom: -5px; }
.pay-btn { width: 441px; height: 80px; background: #4f46e5; border: 0; border-radius: 12px; }
.title { font-size: 40px; line-height: 48px; font-weight: 600; color: #0a0a0a; letter-spacing: -0.5px; padding-left: 1px; }
.title.first { margin-top: 36px; letter-spacing: -0.4px; }
.sub { font-size: 27.2px; line-height: 40px; color: #4b5563; margin-top: 10px; padding-left: 1px; }
.limits { display: flex; gap: 62px; margin-top: 32px; }
.limit { width: 450px; height: 194px; padding: 33px 0 0 39px; }
.limit + .limit { width: 413px; }
.limit-label { font-size: 28px; line-height: 36px; color: #374151; white-space: nowrap; letter-spacing: -0.1px; }
.limit-value { font-size: 36px; line-height: 44px; font-weight: 600; color: #0a0a0a; margin-top: 8px; letter-spacing: -0.3px; }
.limit-link { display: block; font-size: 24px; line-height: 32px; color: #6d5fd6; margin-top: 8px; letter-spacing: -0.25px; }

.section-head { display: flex; justify-content: space-between; align-items: flex-start; margin-top: 63px; }
.section-text { padding-top: 5px; }
.section-text .title { letter-spacing: -0.8px; }
.section-text .sub { margin-top: 9px; }
.history-btn { width: 239px; height: 70px; padding-top: 2px; font-size: 26px; font-weight: 600; color: #111; margin-right: 2px; }

.num { letter-spacing: -0.5px; }
.invoice { height: 521px; margin-top: 32px; overflow: hidden; }
.inv-row { display: grid; grid-template-columns: 1fr 200px 395px 387px; align-items: center; padding: 0 32px; font-size: 28px; border-bottom: 2px solid #d0d5dc; letter-spacing: -0.3px; }
.inv-head { height: 90px; font-weight: 600; color: #111827; background: #fafcff; }
.inv-body { height: 90px; color: #6b7280; border-bottom-color: #e8ebef; }
.runner { color: #111827; }
.r { text-align: right; }
.inv-row .num { letter-spacing: -0.5px; }
.summary { padding: 23px 32px 0; }
.sum-row { display: grid; grid-template-columns: 1fr 387px; height: 58px; align-items: center; font-size: 28px; color: #4b5563; text-align: right; }
.sum-row .num { letter-spacing: -0.3px; }
.sum-row:nth-child(4) { color: #6b7280; letter-spacing: -0.4px; }
.raised { padding-bottom: 14px; }
.strong { font-weight: 700; color: #111 !important; }
.strong span:first-child { color: #1f2937; font-weight: 600; }

.hist { margin-top: 68px; }
.usage { margin-top: 34px; height: 400px; overflow: hidden; }
.usage-head { height: 116px; display: flex; justify-content: space-between; align-items: center; background: #f8fbff; border-bottom: 2px solid #cdd3db; padding: 0 31px 0 32px; }
.usage-tabs { display: flex; align-items: center; gap: 18px; letter-spacing: -0.3px; }
.utab { font-size: 28px; line-height: 56px; padding: 0 22px; border: 2px solid transparent; border-radius: 12px; }
.utab:last-child { margin-left: 6px; }
.utab.on { background: #fff; border-color: #e4e8ee; }
.range { display: flex; height: 66px; background: #fff; border: 2px solid #cdd3db; border-radius: 12px; font-size: 28px; box-shadow: 0 1px 2px rgba(0,0,0,.08); }
.range-sel { width: 282px; display: flex; align-items: center; gap: 22px; padding-left: 25px; border-right: 2px solid #cdd3db; letter-spacing: -0.3px; }
.ic-down { width: 16px; height: 10px; }
.range-date { width: 358px; display: flex; align-items: center; gap: 20px; padding-left: 26px; }
.ic-cal { width: 26px; height: 26px; }
.chart { display: flex; padding: 54px 0 0 55px; background: #fff; height: 200px; }
.axis { width: 83px; font-size: 28px; line-height: 32px; color: #6b7280; flex: none; }
.plot { width: 2171px; height: 60px; margin-top: 15px; flex: none; }

.dock-shadow { position: absolute; left: 660px; width: 1560px; bottom: -60px; height: 80px; background: #000; opacity: .13; filter: blur(36px); }

/* dock */
.dock-area { height: 68px; flex: none; display: flex; justify-content: center; padding-top: 2px; background: linear-gradient(90deg, #000 0%, #000 60%, #180a14 80%, #0c060c 100%); }
.dock { height: 55px; display: flex; padding: 0 1px; background: #231c1e; border: 2px solid #4e4a4c; border-radius: 16px; }
.dcell { width: 40px; height: 100%; flex: none; display: block; padding: 7px 0 0 5px; }
.dcell.on { background: radial-gradient(circle at 20px 47px, #8b8b8b 3px, transparent 3.5px); }
.dbadge { display: flex; align-items: center; justify-content: center; width: 14px; height: 14px; margin: -33px 0 0 21px; border-radius: 50%; background: #ea4335; color: #fff; font-size: 9px; font-weight: 600; }
.dk { width: 30px; height: 30px; display: block; }
.dsep { width: 2px; height: 38px; margin: 8px 8px 0 9px; background: #5a5658; flex: none; }
.svg-may { font: 600 5px "Inter", sans-serif; text-anchor: middle; fill: #fff; }
.svg-five { font: 400 15px "Inter", sans-serif; text-anchor: middle; fill: #333; }
.svg-tv { font: 600 14px "Inter", sans-serif; text-anchor: middle; fill: #fff; }
.svg-x { font: 700 10px "Inter", sans-serif; text-anchor: middle; fill: #fff; }
.svg-html { font: 600 4px "Inter", sans-serif; text-anchor: middle; fill: #555; }
```
